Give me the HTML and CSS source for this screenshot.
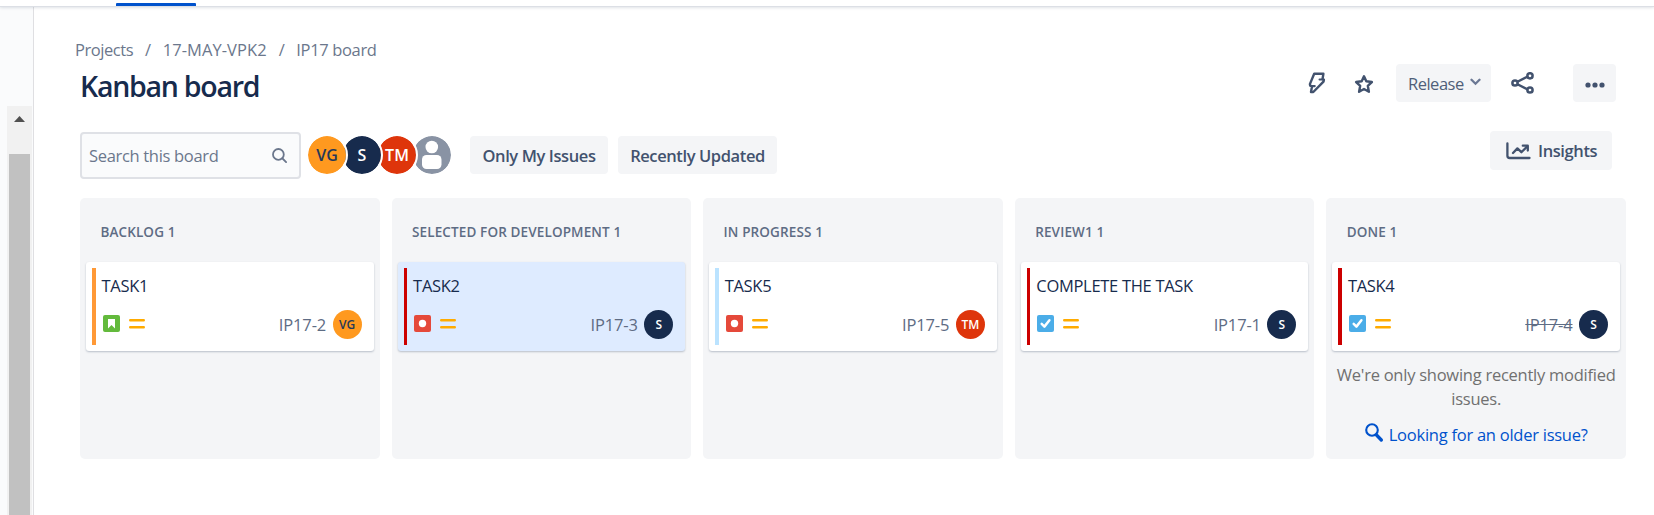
FILE: index.html
```
<!DOCTYPE html>
<html lang="en">
<head>
<meta charset="utf-8">
<title>Kanban board</title>
<link rel="stylesheet" href="styles.css">
</head>
<body>
<svg class="defs" aria-hidden="true">
  <symbol id="story" viewBox="0 0 17 17"><rect width="17" height="17" rx="2" fill="#63ba3c"/><path d="M5 4h7v9.5L8.5 10 5 13.5z" fill="#fff"/></symbol>
  <symbol id="bug" viewBox="0 0 17 17"><rect width="17" height="17" rx="2" fill="#e5493a"/><circle cx="8.5" cy="8.5" r="3.7" fill="#fff"/></symbol>
  <symbol id="task" viewBox="0 0 17 17"><rect width="17" height="17" rx="2" fill="#4bade8"/><path d="M4.7 8.9l2.7 2.7 5-6.3" fill="none" stroke="#fff" stroke-width="2.5" stroke-linecap="round" stroke-linejoin="round"/></symbol>
  <symbol id="medium" viewBox="0 0 16 12"><path d="M1.2 2.2h13.6M1.2 9.3h13.6" stroke="#ffab00" stroke-width="2.4" stroke-linecap="round"/></symbol>
</svg>
<header class="topbar"><span class="topbar-tab"></span></header>
<div class="app">
  <aside class="sidebar">
    <div class="scrollbar">
      <svg class="scroll-arrow" width="11" height="6" viewBox="0 0 11 6"><path d="M0 6L5.5 0 11 6z" fill="#505050"/></svg>
      <div class="scroll-thumb"></div>
    </div>
  </aside>
  <main class="main">
    <nav class="crumbs"><span class="crumb-first">Projects</span><span>/</span><span class="crumb-project">17-MAY-VPK2</span><span>/</span><span>IP17 board</span></nav>
    <div class="heading">
      <h1>Kanban board</h1>
      <div class="actions">
        <svg class="bolt" width="18" height="22" viewBox="0 0 18 22"><path d="M6.2 1.8h9.2l-.9 5.4 1.4.5-.4 2L5.3 20H3l1-5.6-1.8-.7-.3-1.6z" fill="none" stroke="#42526e" stroke-width="2.4" stroke-linejoin="round"/><path d="M11.6 7.5h3M3.5 14.2l3.2-.1" stroke="#42526e" stroke-width="2.2" stroke-linecap="round"/></svg>
        <svg class="star" width="20" height="20" viewBox="0 0 20 20"><path d="M10 2.3l2.3 5 5.6.7-4.1 3.8 1.1 6L10 15l-4.9 2.8 1.1-6L2.1 8l5.6-.7z" fill="none" stroke="#42526e" stroke-width="2.4" stroke-linejoin="round"/></svg>
        <button class="btn release">Release<svg width="11" height="8" viewBox="0 0 11 8"><path d="M1.5 1.7l4 4 4-4" fill="none" stroke="#6b7894" stroke-width="2.3" stroke-linecap="round"/></svg></button>
        <svg class="share" width="23" height="22" viewBox="0 0 23 22"><path d="M4 11l14.8-7.5M4 11l14.8 7.5" stroke="#42526e" stroke-width="2.5"/><g fill="#fff" stroke="#42526e" stroke-width="2.5"><circle cx="4" cy="11" r="2.6"/><circle cx="19" cy="3.8" r="2.6"/><circle cx="19" cy="18" r="2.6"/></g></svg>
        <button class="btn more"><svg width="20" height="6" viewBox="0 0 20 6" fill="#42526e"><circle cx="3" cy="3" r="2.6"/><circle cx="10" cy="3" r="2.6"/><circle cx="17" cy="3" r="2.6"/></svg></button>
      </div>
    </div>
    <div class="filters">
      <div class="search"><span>Search this board</span><svg width="15" height="15" viewBox="0 0 15 15"><g fill="none" stroke="#6b778c" stroke-width="1.8" stroke-linecap="round"><circle cx="6.4" cy="6.4" r="5.4"/><path d="M10.5 10.5l3.6 3.6"/></g></svg></div>
      <div class="people">
        <span class="avatar amber">VG</span><span class="avatar navy">S</span><span class="avatar red">TM</span><span class="avatar nobody"><svg width="38" height="38" viewBox="0 0 38 38" fill="#fff"><circle cx="18.8" cy="11" r="6.3"/><rect x="9" y="19" width="19.5" height="14" rx="4.5"/></svg></span>
      </div>
      <button class="btn strong mine">Only My Issues</button>
      <button class="btn strong recent">Recently Updated</button>
      <button class="btn strong insights"><svg width="25" height="18" viewBox="0 0 25 18"><g fill="none" stroke="#42526e" stroke-width="2.3" stroke-linecap="round" stroke-linejoin="round"><path d="M1.4 1.4v12.3q0 2.3 2.3 2.3h19.8"/><path d="M7 11l4.4-4.6 4 3.8L21 4.6"/><path d="M16.8 3.7h5v4.8"/></g></svg><span>Insights</span></button>
    </div>
    <div class="board">
      <section class="column">
        <h2>BACKLOG 1</h2>
        <article class="card bar-amber">
          <div class="card-title">TASK1</div>
          <div class="card-foot"><svg class="type"><use href="#story"/></svg><svg class="prio"><use href="#medium"/></svg><span class="key">IP17-2</span><span class="mini amber">VG</span></div>
        </article>
      </section>
      <section class="column">
        <h2>SELECTED FOR DEVELOPMENT 1</h2>
        <article class="card bar-red thin selected">
          <div class="card-title">TASK2</div>
          <div class="card-foot"><svg class="type"><use href="#bug"/></svg><svg class="prio"><use href="#medium"/></svg><span class="key">IP17-3</span><span class="mini navy">S</span></div>
        </article>
      </section>
      <section class="column">
        <h2>IN PROGRESS 1</h2>
        <article class="card bar-sky">
          <div class="card-title">TASK5</div>
          <div class="card-foot"><svg class="type"><use href="#bug"/></svg><svg class="prio"><use href="#medium"/></svg><span class="key">IP17-5</span><span class="mini red">TM</span></div>
        </article>
      </section>
      <section class="column">
        <h2>REVIEW1 1</h2>
        <article class="card bar-red thin">
          <div class="card-title">COMPLETE THE TASK</div>
          <div class="card-foot"><svg class="type"><use href="#task"/></svg><svg class="prio"><use href="#medium"/></svg><span class="key">IP17-1</span><span class="mini navy">S</span></div>
        </article>
      </section>
      <section class="column">
        <h2>DONE 1</h2>
        <article class="card bar-red">
          <div class="card-title">TASK4</div>
          <div class="card-foot"><svg class="type"><use href="#task"/></svg><svg class="prio"><use href="#medium"/></svg><span class="key resolved">IP17-4</span><span class="mini navy">S</span></div>
        </article>
        <p class="note">We're only showing recently modified<br>issues.</p>
        <a class="older"><svg width="18" height="19" viewBox="0 0 18 19"><g fill="none" stroke="#0052cc"><circle cx="7" cy="7" r="5.8" stroke-width="2.1"/><path d="M11.5 12l4.8 5" stroke-width="3.3" stroke-linecap="round"/></g></svg><span>Looking for an older issue?</span></a>
      </section>
    </div>
  </main>
</div>
</body>
</html>
```
FILE: styles.css
```
* { box-sizing: border-box; }

body {
  margin: 0;
  height: 515px;
  overflow: hidden;
  display: flex;
  flex-direction: column;
  background: #fff;
  color: #172b4d;
  font: 400 16.5px/24px "Open Sans", "Noto Sans", sans-serif;
  letter-spacing: -0.27px;
}

.defs { display: none; }
svg { flex: none; }

/* Top navigation edge */
.topbar {
  flex: none;
  height: 6px;
  padding: 3px 0 0 116px;
  position: relative;
  box-shadow: 0 1px 0 #dcdfe5, 0 2px 3px rgba(9, 30, 66, .12);
}
.topbar-tab { display: block; width: 80px; height: 3px; background: #0052cc; border-radius: 1px 1px 0 0; }

.app { flex: 1; display: flex; min-height: 0; }

/* Sidebar */
.sidebar { width: 34px; padding: 100px 1px 0 7px; background: #fafbfc; border-right: 1px solid #dfdfe2; display: flex; flex: none; }
.scrollbar { width: 25px; padding: 10px 2px 0; background: #f1f1f1; display: flex; flex-direction: column; align-items: center; }
.scroll-arrow { margin-bottom: 32px; }
.scroll-thumb { width: 21px; flex: 1; background: #c1c1c1; }

.main { flex: 1; padding: 32px 28px 0 46px; display: flex; flex-direction: column; min-width: 0; }

/* Breadcrumbs and heading */
.crumbs { display: flex; gap: 12px; margin-left: -5px; height: 24px; color: #6b778c; letter-spacing: -0.35px; }
.crumb-first { letter-spacing: -0.45px; }
.crumb-project { letter-spacing: 0.05px; }

.heading { display: flex; justify-content: space-between; height: 68px; }
h1 { margin: 0; font-size: 28.5px; font-weight: 600; line-height: 49px; letter-spacing: -1.25px; }
.actions { display: flex; align-items: flex-start; margin-right: 10px; padding-top: 2px; }
.bolt { margin: 8px 28px 0 0; }
.star { margin: 10px 22.5px 0 0; }

.btn {
  height: 38px;
  padding: 0 12px;
  border: 0;
  border-radius: 4px;
  background: #f4f5f7;
  color: #42526e;
  font: inherit;
  letter-spacing: inherit;
  display: flex;
  align-items: center;
  white-space: nowrap;
}
.strong { font-weight: 600; letter-spacing: -0.4px; }
.release { width: 95px; padding: 2px 10px 0 12px; justify-content: space-between; color: #505f79; letter-spacing: -0.5px; }
.release svg { margin-bottom: 4px; }
.share { margin: 8px 39px 0 20px; }
.more { width: 43px; justify-content: center; padding: 3px 0 0; }

/* Search, people and quick filters */
.filters { display: flex; align-items: flex-start; height: 68px; padding-top: 2px; }
.search {
  width: 221px;
  height: 47px;
  padding: 0 12px 0 7px;
  border: 2px solid #dfe1e6;
  border-radius: 4px;
  background: #fafbfc;
  color: #6b778c;
  display: flex;
  align-items: center;
  justify-content: space-between;
}
.search span { letter-spacing: -0.32px; }

.people { display: flex; margin: 2px 17px 0 5px; }
.avatar, .mini { display: flex; align-items: center; justify-content: center; border-radius: 50%; font-weight: 600; color: #fff; letter-spacing: 0; flex: none; }
.avatar { box-sizing: content-box; width: 38px; height: 38px; margin-right: -7px; border: 2px solid #fff; font-size: 16px; position: relative; }
.avatar:nth-child(1) { z-index: 4; }
.avatar:nth-child(2) { z-index: 3; }
.avatar:nth-child(3) { z-index: 2; }
.avatar:last-child { margin-right: 0; }
.amber { background: #ff991f; color: #253858; background-clip: padding-box; }
.navy { background: #172b4d; background-clip: padding-box; }
.red { background: #de350b; background-clip: padding-box; }
.nobody { background: #8993a4; background-clip: padding-box; }

.mine, .recent { margin-top: 4px; padding-top: 1px; }
.mine { width: 138px; margin-right: 10px; justify-content: center; }
.recent { width: 159px; justify-content: center; }
.insights { width: 122px; height: 39px; margin: -1px 14px 0 auto; padding: 0 10px 0 16px; gap: 7px; }

/* Board */
.board { display: grid; grid-template-columns: repeat(5, 1fr); gap: 12px; height: 261px; }
.column { padding: 0 6px; border-radius: 5px; background: #f4f5f7; min-width: 0; }
h2 { margin: 0; padding: 24px 14px 20px 14.4px; font-size: 13.5px; line-height: 20px; font-weight: 600; color: #5e6c84; letter-spacing: 0.13px; white-space: nowrap; }

.card {
  display: flex;
  flex-direction: column;
  height: 89px;
  padding: 12px 12px 0 15.5px;
  border-radius: 3px;
  background: #fff linear-gradient(var(--bar), var(--bar)) 6px 6px / 4px 77px no-repeat;
  box-shadow: 0 1px 2px rgba(9, 30, 66, .25);
}
.thin { background-size: 3px 77px; }
.bar-amber { --bar: #ff9936; }
.bar-red { --bar: #cc0000; }
.bar-sky { --bar: #bbe3ff; }
.selected { background-color: #deebff; }
.card-title { line-height: 24px; letter-spacing: -0.3px; }
.card-foot { display: flex; align-items: center; height: 29px; margin-top: 12px; }
.type { width: 17px; height: 17px; margin: 0 9px 2px 1px; }
.prio { width: 16px; height: 12px; margin-bottom: 2px; }
.key { margin: 1px 6.5px 0 auto; color: #5e6c84; letter-spacing: -0.15px; }
.resolved { text-decoration: line-through; }
.mini { width: 29px; height: 29px; font-size: 12px; }

.note { margin: 12px -6px 0; text-align: center; color: #707070; letter-spacing: -0.25px; white-space: nowrap; }
.older { display: flex; justify-content: center; gap: 6px; margin-top: 12px; color: #0052cc; white-space: nowrap; letter-spacing: -0.25px; }
```
